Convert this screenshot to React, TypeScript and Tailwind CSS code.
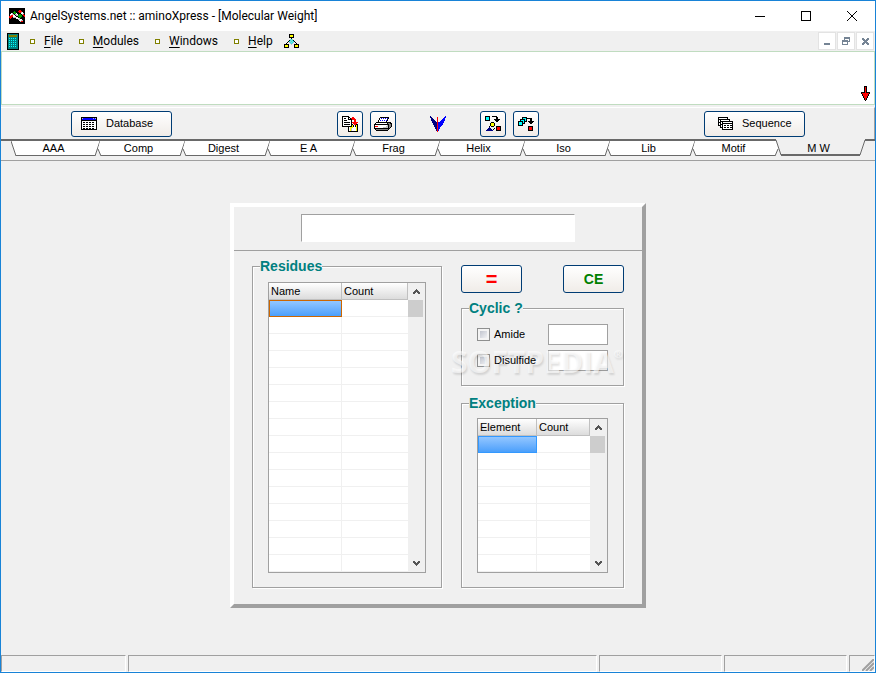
import { ReactNode, useState } from "react";

const palette: Record<string, string> = {
    k: "#000000",
    w: "#ffffff",
    g: "#808080",
    s: "#c0c0c0",
    b: "#0000ff",
    n: "#000080",
    r: "#ff0000",
    y: "#ffff00",
    c: "#00ffff",
    t: "#008080",
    o: "#808000",
    e: "#00a000",
    d: "#555555",
    m: "#758494",
};

// draws one square for every letter of the rows
function PixelIcon({ rows }: { rows: string[] }) {
    return (
        <svg width={rows[0].length} height={rows.length} shapeRendering="crispEdges" className="shrink-0" aria-hidden="true">
            {rows.map((row, y) =>
                row.split("").map((p, x) =>
                    palette[p] ? <rect key={`${x}-${y}`} x={x} y={y} width="1" height="1" fill={palette[p]} /> : null
                )
            )}
        </svg>
    );
}

const appIcon = [
    "kkkkkkkkkkkkkkkk",
    "kkkkkkkkkkkkkkkk",
    "kkkkkkkkkkrrkkkk",
    "kkkkkekkkrrrrkkk",
    "kkkkeeekkkrrswkk",
    "kkwskeewkkkkwwsk",
    "kwwssksswkeeksrk",
    "ksrrwwksseeeekrr",
    "rrrrwwwkkeeeekkr",
    "rrrkssswwkeekkkk",
    "krkkkkkwwwskkkkk",
    "kkkkkkkkksswwkkk",
    "kkkkkkkkkkwwsskk",
    "kkkkkkkkkkksrrkk",
    "kkkkkkkkkkkkkkkk",
    "kkkkkkkkkkkkkkkk",
];

const calculator = [
    "kkkkkkkkkkkk",
    "kttttttttttk",
    "ktooooooootk",
    "ktooooooootk",
    "kttttttttttk",
    "ktctctctcttk",
    "kttttttttttk",
    "ktctctctcttk",
    "kttttttttttk",
    "ktctctctcttk",
    "kttttttttttk",
    "ktctctctcttk",
    "kttttttttttk",
    "ktctctctcttk",
    "kttttttttttk",
    "kttttttttttk",
    "kkkkkkkkkkkk",
];

const bullet = ["ooooo", "owwwo", "owwwo", "owwwo", "ooooo"];

const tree = [
    ".....kkkkk.....",
    ".....kyyyk.....",
    ".....kyyyk.....",
    ".....kkkkk.....",
    ".......k.......",
    "......scs......",
    ".....kcsck.....",
    "....kcscsck....",
    "...k.scscs.k...",
    "..k...scs...k..",
    "kkkkk..s..kkkkk",
    "kyyyk.....kyyyk",
    "kyyyk.....kyyyk",
    "kkkkk.....kkkkk",
];

const database = [
    "kkkkkkkkkkkkkkkk",
    "ksbbbbbbbbbbsbsk",
    "kbbbbbbbbbbbbbbk",
    "kkkkkkkkkkkkkkkk",
    "kwwwwwwwwwwwwwwk",
    "kwkkwkkwkkwkkwwk",
    "kwwwwwwwwwwwwwwk",
    "kwkkwkkwkkwkkwwk",
    "kwwwwwwwwwwwwwwk",
    "kwkkwkkwkkwkkwwk",
    "kwwwwwwwwwwwwwwk",
    "kwkkwkkwkkwkkwwk",
    "kkkkkkkkkkkkkkkk",
];

const sheets = [
    "kkkkkkkkkk.....",
    "kwwwwwwwwk.....",
    "kkkkkkkkkkkk...",
    "kwkwwwwwwwwk...",
    "kwkkkkkkkkkkkkk",
    "kkkwkwwwwwwwwwk",
    "kwkwkkkkkkkkkkk",
    "kwkkkwwwwwwwwwk",
    "kkkwkwkkwkkwkkk",
    "..kwkwwwwwwwwwk",
    "..kkkwkkwkkwkkk",
    "....kwwwwwwwwwk",
    "....kkkkkkkkkkk",
];

const copyTo = [
    "kkkkkkk.........",
    "kwwwwwkk..rr....",
    "kwkkwwkwkrrrr...",
    "kwwwwwkkkkrrrr..",
    "kwkkkwwwwk..rr..",
    "kwwwwwwwwk..rr..",
    "kwkkkkkkwkrrrrrr",
    "kwwwwwwwwk.rrrr.",
    "kwkkkkkkwkk.rrkk",
    "kwwwwwwwwkykwkyk",
    "kkkkkkkkkkykwkyk",
    "......kwyyywwwyk",
    "......kwyswwwwyk",
    "......kwyswwwwyk",
    "......kwyswwwwyk",
    "......kkkkkkkkkk",
];

const printer = [
    "......kkkkkkkkk...",
    ".....kwbwbwbwbk...",
    ".....kwwwwwwwk....",
    "....kwbwbwbwbk....",
    "....kwwwwwwwk.....",
    "..kkkkkkkkkkkkkkk.",
    ".kwwwwwwwwwwwkggkk",
    "kkkkkkkkkkkkkkkggk",
    "kwwwwwwwwwwwwskggk",
    "krrrwwwwwwwwsskggk",
    "kwwwwwwwwssssskgk.",
    "kkkkkkkkkkkkkkkk..",
    ".kggggggggggggk...",
    "..kkkkkkkkkkkk....",
];

const wings = [
    "n..............b",
    "nn.....r......bb",
    ".nn....r.....bb.",
    ".nnn...r....bbb.",
    ".nnnn..r...bbbb.",
    "..nnnn.r..bbbb..",
    "..nnnnnrbbbbbb..",
    "...nnnnrbbbbb...",
    "...nnnnrbbbbb...",
    "....nnnrbbbb....",
    "....nnnrbbb.....",
    ".....nnrbb......",
    ".....nnrbb......",
    "......nrb.......",
    "......nrb.......",
    ".......r........",
];

const convert = [
    "kkkkk..kkkkk....",
    "kccck......kk...",
    "kccck......kk...",
    "kccck....kkkkkk.",
    "kkkkk.....kkkk..",
    "...........kk...",
    "......kkk.......",
    ".....kyyyk......",
    ".....kyyyk......",
    ".....kyyyk......",
    "....k.kkk..kkkkk",
    "....n......krrrk",
    "...nnn...k.krrrk",
    "..nnnnn.k..krrrk",
    ".nnnnnnn...kkkkk",
];

const collect = [
    "....kkkkk.......",
    "....kccckkkkkk..",
    "..kkkkkck...kk..",
    "..kccckck...kk..",
    "kkkkkckkk.kkkkkk",
    "kccckck....kkkk.",
    "kccckkk.....kk..",
    "kccck...........",
    "kkkkk...........",
    "..........kkkkk.",
    "..........krrrk.",
    "..........krrrk.",
    "..........krrrk.",
    "..........kkkkk.",
];

const redArrow = [
    "...kkk...",
    "...krk...",
    "...krk...",
    "...krk...",
    "...krk...",
    "...krk...",
    "kkkkrkkkk",
    "krrrrrrrk",
    ".krrrrrk.",
    ".krrrrrk.",
    "..krrrk..",
    "..krrrk..",
    "...krk...",
    "...krk...",
    "....k....",
];

const mdiMin = ["......", "......", "......", "......", "......", "mmmmmm", "mmmmmm"];
const mdiRestore = ["..mmmmmm", "..mmmmmm", "..m....m", "mmmmmm.m", "mmmmmmmm", "m....m..", "m....m..", "mmmmmm.."];
const mdiClose = ["mm...mm", "mmm.mmm", ".mmmmm.", "..mmm..", ".mmmmm.", "mmm.mmm", "mm...mm"];
const chevronUp = ["...d...", "..ddd..", ".ddddd.", "ddd.ddd", "dd...dd"];
const chevronDown = [...chevronUp].reverse();

const menus = ["File", "Modules", "Windows", "Help"];
const tabs = ["AAA", "Comp", "Digest", "E A", "Frag", "Helix", "Iso", "Lib", "Motif", "M W"];

const raised = "flex items-center rounded-[3px] border border-[#003c74] bg-gradient-to-b from-white to-[#f0ece8]";

function TitleBar() {
    return (
        <header className="flex h-[30px] items-center bg-white pl-2">
            <PixelIcon rows={appIcon} />
            <h1 className="ml-[5px] truncate font-['Roboto',sans-serif] text-[12px]">
                AngelSystems.net :: aminoXpress - [Molecular Weight]
            </h1>
            <div className="ml-auto flex">
                <button aria-label="Minimize" className="flex h-[30px] w-[46px] items-center justify-center">
                    <svg width="10" height="10" stroke="#000" shapeRendering="crispEdges"><path d="M0 5.5H10" /></svg>
                </button>
                <button aria-label="Maximize" className="flex h-[30px] w-[46px] items-center justify-center">
                    <svg width="10" height="10" fill="none" stroke="#000" shapeRendering="crispEdges"><path d="M.5 .5H9.5V9.5H.5Z" /></svg>
                </button>
                <button aria-label="Close" className="flex h-[30px] w-[46px] items-center justify-center">
                    <svg width="10" height="10" stroke="#000"><path d="M0 0L10 10M10 0L0 10" /></svg>
                </button>
            </div>
        </header>
    );
}

function MdiButton({ label, rows }: { label: string; rows: string[] }) {
    return (
        <button aria-label={label} className="flex h-[18px] w-[18px] items-center justify-center border border-[#e3e3e3] bg-white">
            <PixelIcon rows={rows} />
        </button>
    );
}

function MenuBar() {
    return (
        <nav className="flex h-5 items-center pr-px pl-[6px] font-['Roboto',sans-serif] text-[12px]">
            <PixelIcon rows={calculator} />
            <div className="ml-[11px] flex items-center gap-4">
                {menus.map((menu) => (
                    <button key={menu} className="flex items-center gap-[9px]">
                        <PixelIcon rows={bullet} />
                        <span>
                            <u className="underline-offset-2">{menu[0]}</u>
                            {menu.slice(1)}
                        </span>
                    </button>
                ))}
            </div>
            <button aria-label="Structure" className="ml-[11px]">
                <PixelIcon rows={tree} />
            </button>
            <div className="ml-auto flex gap-px">
                <MdiButton label="Minimize document" rows={mdiMin} />
                <MdiButton label="Restore document" rows={mdiRestore} />
                <MdiButton label="Close document" rows={mdiClose} />
            </div>
        </nav>
    );
}

function ToolButton({ label, rows }: { label: string; rows: string[] }) {
    return (
        <button aria-label={label} className={`${raised} h-[26px] w-[26px] justify-center`}>
            <PixelIcon rows={rows} />
        </button>
    );
}

function Toolbar() {
    return (
        <div className="mt-[2px] flex h-8 items-center justify-between border-t border-r border-t-white border-r-[#a0a0a0] pr-[69px] pl-[70px]">
            <button className={`${raised} h-[26px] w-[101px] gap-[9px] pl-[9px]`}>
                <PixelIcon rows={database} />
                Database
            </button>
            <div className="flex items-center gap-[34px]">
                <div className="flex gap-[7px]">
                    <ToolButton label="Copy" rows={copyTo} />
                    <ToolButton label="Print" rows={printer} />
                </div>
                <button aria-label="Angel"><PixelIcon rows={wings} /></button>
                <div className="flex gap-[7px]">
                    <ToolButton label="Convert" rows={convert} />
                    <ToolButton label="Collect" rows={collect} />
                </div>
            </div>
            <button className={`${raised} h-[26px] w-[101px] gap-[9px] pl-[13px]`}>
                <PixelIcon rows={sheets} />
                Sequence
            </button>
        </div>
    );
}

function TabStrip() {
    const [active, setActive] = useState(tabs.length - 1);

    return (
        <div role="tablist" className="flex h-[22px] border-b border-[#a0a0a0]">
            <div className="w-[10px] border-t-2 border-[#696969]" />
            {tabs.map((tab, i) => {
                const on = i === active;
                const last = i === tabs.length - 1;
                const beforeActive = i === active - 1;
                const fill = `${i === 0 || on ? "M0 0" : "M4 0L2 8"}L5 15H84L${beforeActive ? "87 8L85 0" : "89 0"}Z`;
                const left = on || i === 0 ? "M0 0L5 15" : "M2 8L5 15";
                const right = beforeActive ? "M84 15L87 8" : "M84 15L89 0";
                return (
                    <button
                        key={tab}
                        role="tab"
                        aria-selected={on}
                        onClick={() => setActive(i)}
                        className={`relative h-4 shrink-0 ${last ? "w-[89px] pr-1" : "w-[85px]"} ${on ? "pt-[2px]" : "border-t-2 border-[#696969]"}`}
                    >
                        <svg width="90" height="16" className={`absolute left-0 ${on ? "top-px" : "top-0"}`} fill="none">
                            <path d={fill} fill={on ? "#f0f0f0" : "#fff"} />
                            <path d={left + right} stroke="#696969" />
                            <path d={on ? "M5 15H84" : "M5 14.5H84"} stroke="#696969" strokeWidth={on ? 2 : 1} />
                        </svg>
                        <span className="relative block leading-3">{tab}</span>
                    </button>
                );
            })}
            <div className="flex-1 border-t-2 border-[#696969]" />
        </div>
    );
}

function Group({ title, className, children }: { title: string; className: string; children: ReactNode }) {
    return (
        <fieldset className={`border border-[#a0a0a0] px-[15px] pb-[14px] shadow-[1px_1px_0_#fff,inset_1px_1px_0_#fff] ${className}`}>
            <legend className="-ml-[8px] bg-[#f0f0f0] text-[14px] leading-4 font-bold text-[#008080]">{title}</legend>
            {children}
        </fieldset>
    );
}

type GridProps = { name: string; columns: string[]; count: number; first: string; selected: string };

function Grid({ name, columns, count, first, selected }: GridProps) {
    return (
        <div className="flex border border-[#a0a0a0] bg-white">
            <table aria-label={name} className="flex-1 table-fixed border-separate border-spacing-0">
                <thead>
                    <tr>
                        {columns.map((column, i) => (
                            <th
                                key={column}
                                className={`h-[17px] border-r border-b border-[#c0c0c0] bg-gradient-to-b from-white to-[#dcdcdc] p-0 pl-[2px] text-left leading-4 font-normal ${i === 0 ? first : ""}`}
                            >
                                {column}
                            </th>
                        ))}
                    </tr>
                </thead>
                <tbody>
                    {Array.from({ length: count }, (_, row) => (
                        <tr key={row}>
                            <td className={`h-[17px] p-0 ${row === 0 ? selected : "border-r border-b border-[#f0f0f0]"}`} />
                            <td className="h-[17px] border-b border-[#f0f0f0] p-0" />
                        </tr>
                    ))}
                </tbody>
            </table>
            <div className="flex w-[17px] flex-col bg-[#f0f0f0]">
                <button aria-label={`Scroll ${name} up`} className="flex h-[17px] items-center justify-center">
                    <PixelIcon rows={chevronUp} />
                </button>
                <div className="h-[17px] w-[15px] bg-[#cdcdcd]" />
                <button aria-label={`Scroll ${name} down`} className="mt-auto flex h-[17px] items-center justify-center">
                    <PixelIcon rows={chevronDown} />
                </button>
            </div>
        </div>
    );
}

function CheckRow({ label }: { label: string }) {
    return (
        <div className="flex h-[21px] items-center justify-between">
            <label className="flex items-center gap-1">
                <input type="checkbox" className="h-[13px] w-[13px] appearance-none border border-[#8e8f8f] bg-gradient-to-br from-[#b4b8c4] to-white shadow-[inset_0_0_0_2px_#f4f4f4] checked:bg-[#008080]" />
                <span className="relative z-10">{label}</span>
            </label>
            <input aria-label={`${label} count`} className="h-[21px] w-[60px] border border-[#a0a0a0] bg-white px-1" />
        </div>
    );
}

function WeightPanel() {
    return (
        <section className="w-[416px] border-4 border-t-white border-r-[#a0a0a0] border-b-[#a0a0a0] border-l-white">
            <div className="flex h-11 justify-center border-b border-[#a0a0a0] pt-[7px]">
                <input aria-label="Molecular weight" className="h-7 w-[274px] border border-t-[#a0a0a0] border-r-white border-b-white border-l-[#a0a0a0] bg-white px-2 text-[14px]" />
            </div>
            <div className="flex gap-[19px] pt-[7px] pb-4 pl-[18px]">
                <Group title="Residues" className="w-[190px] pt-2">
                    <Grid name="Residues" columns={["Name", "Count"]} count={16} first="w-[73px]" selected="border border-[#cc6600] bg-gradient-to-b from-[#92c6ff] to-[#4a9ffb]" />
                </Group>
                <div className="flex w-[163px] flex-col pt-[7px]">
                    <div className="flex justify-between">
                        <button className={`${raised} h-7 w-[61px] justify-center text-[20px] leading-5 font-bold text-[#ff0000]`}>=</button>
                        <button className={`${raised} h-7 w-[61px] justify-center text-[14px] font-bold text-[#008000]`}>CE</button>
                    </div>
                    <Group title="Cyclic ?" className="relative mt-[7px] pt-2">
                        <div className="flex flex-col gap-[5px]">
                            <CheckRow label="Amide" />
                            <CheckRow label="Disulfide" />
                        </div>
                        <div className="pointer-events-none absolute top-7 -left-[11px] flex font-['Open_Sans',sans-serif] text-[30px] leading-9 font-bold text-white/60 [text-shadow:1px_2px_2px_rgba(0,0,0,0.12)]">
                            SOFTPEDIA<sup className="top-0 text-[11px] leading-5">®</sup>
                        </div>
                    </Group>
                    <Group title="Exception" className="mt-[9px] pt-[7px]">
                        <Grid name="Exception" columns={["Element", "Count"]} count={8} first="w-[59px]" selected="border border-[#3399ff] bg-gradient-to-b from-[#92c6ff] to-[#4a9ffb]" />
                    </Group>
                </div>
            </div>
        </section>
    );
}

function StatusBar() {
    const cell = "border border-t-[#a0a0a0] border-l-[#a0a0a0] border-r-white border-b-white";

    return (
        <footer className="flex h-[17px] gap-[2px]">
            <div className={`${cell} w-[125px]`} />
            <div className={`${cell} flex-1`} />
            <div className={`${cell} w-[123px]`} />
            <div className={`${cell} w-[123px]`} />
            <div className={`${cell} flex w-[26px] items-end justify-end`}>
                <svg width="12" height="12" stroke="#a0a0a0" strokeWidth="2" aria-hidden="true">
                    <path d="M0 12L12 0M4 12L12 4M8 12L12 8" />
                </svg>
            </div>
        </footer>
    );
}

export default function App() {
    return (
        <div className="flex min-h-screen flex-col border border-[#1883d7] bg-[#f0f0f0] font-['Liberation_Sans',sans-serif] text-[11px] text-black">
            <TitleBar />
            <MenuBar />
            <div className="flex h-[54px] items-end justify-end border border-[#c0dcc0] bg-white pr-1 pb-[3px]">
                <button aria-label="Expand"><PixelIcon rows={redArrow} /></button>
            </div>
            <Toolbar />
            <TabStrip />
            <main className="flex flex-1 items-start justify-center pt-[42px] pb-8">
                <WeightPanel />
            </main>
            <StatusBar />
        </div>
    );
}
